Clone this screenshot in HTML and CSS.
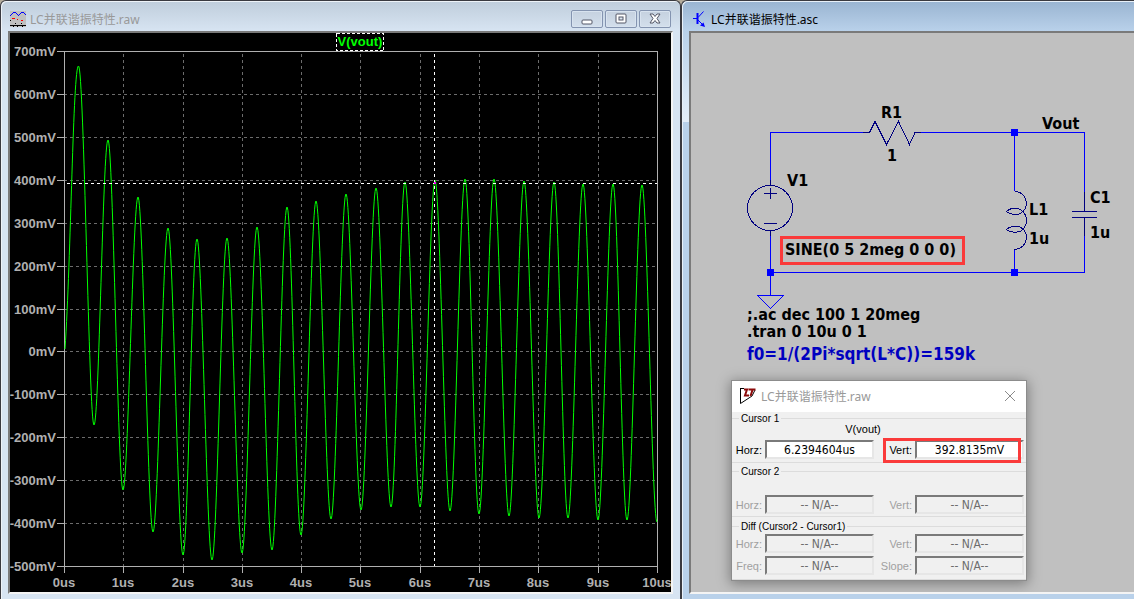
FILE: index.html
```html
<!DOCTYPE html>
<html lang="zh-CN">
<head>
<meta charset="utf-8">
<title>LC并联谐振特性</title>
<link rel="stylesheet" href="styles.css">
</head>
<body>
<main class="desktop">
  <section class="window window-raw">
    <header class="titlebar">
      <svg class="title-icon" viewBox="0 0 16 16" width="16" height="16" shape-rendering="crispEdges" aria-hidden="true">
        <rect width="16" height="16" fill="#c0c0c0"/>
        <path d="M0 5l2-2 2-2h1l3 3h1l3-3h1l3 3" fill="none" stroke="#00f"/>
        <path d="M2 7.500h3M7 8.500h1M11 9.500h2M5 12.500h1" stroke="#f00"/>
        <path d="M0 9.500h1M5 12.500h1M11 12.500h1M0 14.500h16M3 15.500h1M7 15.500h1M12 15.500h1" stroke="#000"/>
      </svg>
      <h1 class="title">LC并联谐振特性.raw</h1>
      <div class="controls">
        <button type="button" class="control" aria-label="Minimize">
          <svg viewBox="0 0 12 12" width="12" height="12"><rect x="1" y="7" width="10" height="4" rx="1" fill="#fff" stroke="#535666"/></svg>
        </button>
        <button type="button" class="control" aria-label="Maximize">
          <svg viewBox="0 0 12 12" width="12" height="12"><rect x="1" y="1" width="10" height="9" rx="1" fill="#fff" stroke="#535666"/><rect x="4" y="4" width="4" height="3" fill="#dce6f1" stroke="#535666"/></svg>
        </button>
        <button type="button" class="control" aria-label="Close">
          <svg viewBox="0 0 12 12" width="12" height="12"><path d="M1 1h3l2 2.500L8 1h3L8 5.500 11 10H8L6 7.500 4 10H1l3-4.500z" fill="#fff" stroke="#535666"/></svg>
        </button>
      </div>
    </header>
    <div class="client client-plot">
      <svg class="plot" viewBox="10 33 661 559" role="img" aria-label="V(vout)">
        <g class="grid">
          <path d="M64 94.500H657M64 137.500H657M64 180.500H657M64 223.500H657M64 266.500H657M64 309.500H657M64 351.500H657M64 394.500H657M64 437.500H657M64 480.500H657M64 523.500H657"/>
          <path d="M123.500 54V566M183.500 54V566M242.500 54V566M301.500 54V566M360.500 54V566M420.500 54V566M479.500 54V566M538.500 54V566M598.500 54V566"/>
        </g>
        <g class="axis">
          <path d="M57 51.500H657.500V573M64.500 51V573M57 566.500H657"/>
          <path d="M57 94.500h7M57 137.500h7M57 180.500h7M57 223.500h7M57 266.500h7M57 309.500h7M57 351.500h7M57 394.500h7M57 437.500h7M57 480.500h7M57 523.500h7"/>
          <path d="M123.500 566v7M183.500 566v7M242.500 566v7M301.500 566v7M360.500 566v7M420.500 566v7M479.500 566v7M538.500 566v7M598.500 566v7"/>
        </g>
        <path class="trace" d="M65 349C71 260 73 66 78.500 66S89 425 94 425S103 140 108 140S118 490 123 490S133 197 138 197S148 532 153 532S163 228 168 228S178 555 183 555S192 239 197 239S207 560 212 560S222 238 227 238S237 553 242 553S252 227 257 227S267 550 272 550S282 207 287 207S296 535 301 535S311 201 316 201S326 519 331 519S341 194 346 194S356 510 361 510S371 188 376 188S386 507 391 507S400 182 405 182S415 507 420 507S430 180 435 180S445 511 450 511S460 179 465 179S474 514 479 514S489 179 494 179S504 516 509 516S519 181 524 181S534 518 539 518S549 182 554 182S563 518 568 518S578 184 583 184S593 520 598 520S608 184 613 184S622 520 627 520S637 185 642 185S652 522 657 522"/>
        <path class="cursor" d="M67 183.500H657M434.500 54V566"/>
        <rect x="434" y="182" width="2" height="2" fill="#f0f"/>
        <g class="axis-label axis-label-y">
          <text x="56" y="56">700mV</text><text x="56" y="99">600mV</text><text x="56" y="142">500mV</text>
          <text x="56" y="185">400mV</text><text x="56" y="228">300mV</text><text x="56" y="271">200mV</text>
          <text x="56" y="314">100mV</text><text x="56" y="356">0mV</text><text x="56" y="399">-100mV</text>
          <text x="56" y="442">-200mV</text><text x="56" y="485">-300mV</text><text x="56" y="528">-400mV</text>
          <text x="56" y="571">-500mV</text>
        </g>
        <g class="axis-label axis-label-x">
          <text x="64" y="587">0us</text><text x="123" y="587">1us</text><text x="183" y="587">2us</text>
          <text x="242" y="587">3us</text><text x="301" y="587">4us</text><text x="360" y="587">5us</text>
          <text x="420" y="587">6us</text><text x="479" y="587">7us</text><text x="538" y="587">8us</text>
          <text x="598" y="587">9us</text><text x="657" y="587">10us</text>
        </g>
        <rect class="trace-box" x="336.500" y="33.500" width="47" height="17"/>
        <text class="trace-name" x="360" y="46">V(vout)</text>
      </svg>
    </div>
  </section>

  <section class="window window-asc">
    <header class="titlebar">
      <svg class="title-icon" viewBox="0 0 14 16" width="14" height="16" aria-hidden="true">
        <path d="M0 7.500h4" fill="none" stroke="#00f"/>
        <path d="M4.500 2v11" fill="none" stroke="#00f" stroke-width="2"/>
        <path d="M5 6.500L10.500 0.500M5 9L11 15" fill="none" stroke="#00f"/>
        <path d="M12 16L7 14.500L10.500 11.500z" fill="#00f"/>
      </svg>
      <h2 class="title">LC并联谐振特性.asc</h2>
    </header>
    <div class="client client-schematic">
      <svg class="schematic" viewBox="691 33 443 559" role="img" aria-label="RLC">
        <path class="wire" d="M770.500 180V132.500H867M920 132.500H1084.500V193M1014.500 132V191M1014.500 250V272M1084.500 236V272.500H770.500M770.500 236V295"/>
        <path class="wire" d="M757.500 295.500H783.500L770.500 308.500Z"/>
        <g class="node">
          <rect x="1011" y="129" width="7" height="7"/><rect x="1011" y="269" width="7" height="7"/><rect x="767" y="269" width="7" height="7"/>
        </g>
        <g class="symbol">
          <path d="M863 132.500H869.500L875 121.500L886.500 144.500L898.500 121.500L909.500 144.500L915 132.500H921"/>
          <circle cx="770" cy="208" r="22.500"/>
          <path d="M770.500 180V185M770.500 230V236M764 193.500H777M770.500 188V199M764 223.500H777"/>
          <path d="M1014.500 191.500C1022 191.500 1026 197 1026.500 203C1026.500 208 1024 211 1021 213C1017 215.500 1010 214.500 1006.500 211.500C1010 207.500 1017 207.500 1021 210C1025 213 1026.500 217 1026.500 221C1026 226 1024 229 1021 231C1017 233 1010 232.500 1006.500 229.500C1010 225.500 1017 225.500 1021 227.500C1025 230 1026.500 234 1026.500 238C1026 244 1022 249 1014.500 249.500"/>
          <path d="M1084.500 192V211M1072 211.500H1097M1072 217.500H1097M1084.500 217V236"/>
        </g>
        <rect class="mark" x="781.500" y="237.500" width="182" height="26"/>
        <g class="label">
          <text x="881" y="118">R1</text><text x="887" y="161">1</text><text x="1042" y="129">Vout</text>
          <text x="787" y="186">V1</text><text x="1029" y="215">L1</text><text x="1029" y="244">1u</text>
          <text x="1090" y="203">C1</text><text x="1090" y="238">1u</text>
          <text x="785" y="255">SINE(0 5 2meg 0 0 0)</text>
          <text x="747" y="320">;.ac dec 100 1 20meg</text>
          <text x="747" y="337">.tran 0 10u 0 1</text>
          <text class="comment" x="747" y="360">f0=1/(2Pi*sqrt(L*C))=159k</text>
        </g>
      </svg>

      <form class="dialog" aria-label="LC并联谐振特性.raw">
        <header class="dialog-title">
          <svg viewBox="0 0 16 16" width="16" height="16" aria-hidden="true">
            <path d="M0.500 0.500V15.500L12 8L15 2" fill="#fff" stroke="#000"/>
            <path d="M0 0.500h4" stroke="#000"/>
            <path d="M4 1.500h3L5 7.500h4M8.500 1.500h7M12.500 2L10.500 8" fill="none" stroke="#8b0a0a" stroke-width="2"/>
          </svg>
          <h3 class="title">LC并联谐振特性.raw</h3>
          <button type="button" class="dialog-close" aria-label="Close">
            <svg viewBox="0 0 12 12" width="12" height="12"><path d="M1 1L11 11M11 1L1 11" stroke="#8a8a8a"/></svg>
          </button>
        </header>
        <fieldset class="group group-first">
          <legend>Cursor 1</legend>
          <p class="trace-label">V(vout)</p>
          <div class="fields">
            <label for="h1">Horz:</label><input id="h1" value="6.2394604us">
            <label for="v1">Vert:</label><input id="v1" value="392.8135mV">
            <span class="highlight"></span>
          </div>
        </fieldset>
        <fieldset class="group group-second" disabled>
          <legend>Cursor 2</legend>
          <div class="fields">
            <label for="h2">Horz:</label><input id="h2" value="-- N/A--">
            <label for="v2">Vert:</label><input id="v2" value="-- N/A--">
          </div>
        </fieldset>
        <fieldset class="group group-diff" disabled>
          <legend>Diff (Cursor2 - Cursor1)</legend>
          <div class="fields">
            <label for="h3">Horz:</label><input id="h3" value="-- N/A--">
            <label for="v3">Vert:</label><input id="v3" value="-- N/A--">
            <label for="f3">Freq:</label><input id="f3" value="-- N/A--">
            <label for="s3">Slope:</label><input id="s3" value="-- N/A--">
          </div>
        </fieldset>
      </form>
    </div>
  </section>
</main>
</body>
</html>
```

FILE: styles.css
```css
* { box-sizing: border-box; }

body {
  margin: 0;
  background: #b5ad9d;
  font-family: "Liberation Sans", "Noto Sans CJK SC", sans-serif;
}

.desktop {
  display: grid;
  grid-template-columns: minmax(0, 681fr) minmax(0, 453fr);
  min-height: 100vh;
}

.window {
  min-width: 0;
  padding: 0 7px 5px;
  border: 1px solid #3a3a40;
  border-bottom: 0;
  border-radius: 6px 6px 0 0;
}

.window-raw {
  background: linear-gradient(#bfcddb, #d7e4f2 30px);
  box-shadow: inset 1px 1px #eef3f8;
}

.window-asc {
  padding-right: 0;
  border-right: 0;
  border-top-right-radius: 0;
  background:
    linear-gradient(#99b4d1, #b9d1ea) 0 0 / 100% 30px no-repeat,
    linear-gradient(#b9d1ea, #e4eef9) 0 30px / 7px 91px no-repeat,
    #b9d1ea;
  box-shadow: inset 1px 1px #e8f0f8;
}

.titlebar {
  display: flex;
  align-items: center;
  gap: 4px;
  height: 30px;
  padding: 6px 0 0 2px;
}

.window-asc .titlebar { padding-left: 4px; }

.title-icon { flex: none; }

.title {
  margin: 0;
  padding-top: 2px;
  color: #999;
  font: 12px/18px "Noto Sans", "Noto Sans CJK SC", sans-serif;
  white-space: nowrap;
}

.window-asc .titlebar .title { color: #000; }

.controls {
  display: flex;
  gap: 2px;
  margin-left: auto;
  padding-right: 2px;
}

.control {
  display: flex;
  align-items: center;
  justify-content: center;
  width: 32px;
  height: 18px;
  padding: 0;
  border: 1px solid #8494b0;
  border-radius: 2px;
  background: linear-gradient(#c5d1df, #d3dfec);
  box-shadow: inset 0 0 0 1px #d8e3ef;
}

.client {
  position: relative;
  border: 2px solid;
  border-color: #7a7a7a #f4f4f4 #f4f4f4 #7a7a7a;
}

.client-plot { background: #000; }

.client-schematic {
  overflow: hidden;
  border-right: 0;
  background: #c0c0c0;
}

.plot,
.schematic {
  display: block;
  width: 100%;
  height: auto;
}

.grid path,
.axis path,
.cursor {
  fill: none;
  shape-rendering: crispEdges;
}

.grid path { stroke: #6c6c6c; stroke-dasharray: 3 3; }
.axis path { stroke: #b0b0b0; }
.cursor { stroke: #fff; stroke-dasharray: 3 3; }

.trace {
  fill: none;
  stroke: #0f0;
  stroke-linejoin: bevel;
}

.axis-label { fill: #b0b0b0; font-size: 13px; font-weight: 700; }
.axis-label-y { text-anchor: end; }
.axis-label-x { text-anchor: middle; }

.trace-box { fill: #000; stroke: #fff; stroke-dasharray: 3 2; shape-rendering: crispEdges; }
.trace-name { fill: #0f0; font-size: 13px; font-weight: 700; text-anchor: middle; }

.wire { fill: none; stroke: #00f; shape-rendering: crispEdges; }
.node { fill: #00f; }
.symbol { fill: none; stroke: #000080; shape-rendering: crispEdges; }
.mark { fill: none; stroke: #fa3a3a; stroke-width: 3; }

.label {
  fill: #000;
  font: 700 16px "DejaVu Sans Condensed", "Noto Sans", sans-serif;
}

.comment { fill: #0000c0; font-size: 17px; }

.dialog {
  position: absolute;
  top: 348px;
  left: 41px;
  width: 294px;
  background: #f0f0f0;
  box-shadow: 0 0 0 1px #8c8c8c, 0 2px 12px 2px rgba(0, 0, 0, 0.35);
  font-size: 11px;
}

.dialog-title {
  display: flex;
  align-items: center;
  gap: 5px;
  height: 31px;
  padding: 0 9px 2px 8px;
  background: #fff;
}

.dialog-close {
  display: flex;
  margin-left: auto;
  padding: 1px;
  border: 0;
  background: none;
}

.group {
  min-width: 0;
  margin: 0;
  padding: 0;
  border: 1px solid #dcdcdc;
  border-width: 1px 0;
}

.group legend {
  margin-left: 7px;
  padding: 0 2px;
  color: #000;
  font-size: 10px;
  line-height: 13px;
}

.group-first { padding-bottom: 3px; }
.group-second { margin-top: 2px; padding: 17px 0 2px; }
.group-diff { margin-top: 3px; padding: 1px 0 4px; }

.trace-label {
  margin: -2px 0 5px;
  padding-right: 32px;
  line-height: 12px;
  text-align: center;
}

.fields {
  position: relative;
  display: grid;
  grid-template-columns: 30px 1fr 35px 1fr;
  gap: 3px;
  align-items: center;
  padding-right: 2px;
}

.fields label { text-align: right; white-space: nowrap; }

.fields input {
  width: 100%;
  min-width: 0;
  height: 19px;
  padding: 0;
  border: 2px solid;
  border-color: #7a7a7a #e6e6e6 #e6e6e6 #7a7a7a;
  background: #fff;
  color: #000;
  font: 12px "DejaVu Sans Condensed", "Noto Sans", sans-serif;
  text-align: center;
}

.group:disabled label { color: #a0a0a0; }
.group:disabled input { background: #f0f0f0; color: #6d6d6d; }

.highlight {
  position: absolute;
  top: -2px;
  right: 5px;
  bottom: -4px;
  width: 138px;
  border: 3px solid #fa3a3a;
  pointer-events: none;
}
```
